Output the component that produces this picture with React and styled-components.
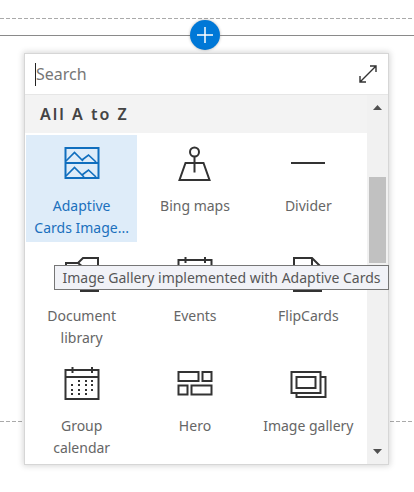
import React from "react";
import styled, { createGlobalStyle } from "styled-components";

const GlobalStyle = createGlobalStyle`
  *, *::before, *::after { box-sizing: border-box; }
  body {
    margin: 0;
    background: #fff;
    color: #666;
    font-family: "Segoe UI", "Noto Sans", "Open Sans", sans-serif;
    font-size: 14px;
  }
  button, input { font: inherit; color: inherit; }
`;

const Canvas = styled.main`
  padding-top: 18px;
  min-height: 100vh;
  overflow: hidden;
`;

const dashes = "repeating-linear-gradient(90deg, #aaa 0 4px, transparent 4px 6px)";

const Section = styled.section`
  position: relative;
  min-height: 404px;
  background: ${dashes} top / 100% 1px no-repeat, ${dashes} bottom / 100% 1px no-repeat;
`;

const InsertBar = styled.div`
  display: grid;
  grid-template-columns: 1fr 30px 1fr;
  align-items: center;
  padding: 2px 4px 0 0;
  &::before, &::after {
    content: "";
    height: 1px;
    background: #8a8a8a;
  }
  &::after { margin-right: -4px; }
`;

const AddButton = styled.button`
  display: grid;
  place-items: center;
  width: 30px;
  height: 30px;
  padding: 0;
  border: 0;
  border-radius: 50%;
  background: #0078d7;
  color: #fff;
  box-shadow: 0 0 3px rgba(0, 0, 0, 0.3);
`;

const Toolbox = styled.div`
  position: absolute;
  top: 35px;
  left: 24px;
  right: 25px;
  border: 1px solid #d6d6d6;
  background: #fff;
  box-shadow: 0 0 6px 1px rgba(0, 0, 0, 0.16);
`;

const SearchRow = styled.div`
  display: flex;
  align-items: center;
  height: 41px;
  padding: 0 11px 0 10px;
  border-bottom: 1px solid #e6e6e6;
`;

const Caret = styled.span`
  width: 1px;
  height: 23px;
  background: #222;
`;

const SearchInput = styled.input`
  flex: 1;
  min-width: 0;
  padding: 0;
  border: 0;
  outline: 0;
  background: transparent;
  font-size: 16px;
  &::placeholder { color: #767676; opacity: 1; }
`;

const ExpandButton = styled.button`
  display: flex;
  padding: 0;
  border: 0;
  background: none;
  color: #333;
`;

const Scroller = styled.div`
  display: grid;
  grid-template-columns: 1fr 21px;
`;

const Heading = styled.h2`
  margin: 0;
  padding-left: 15px;
  height: 38px;
  line-height: 38px;
  background: #f3f3f3;
  color: #444;
  font-size: 16px;
  font-weight: 600;
  letter-spacing: 2px;
`;

const Tiles = styled.div`
  display: grid;
  grid-template-columns: repeat(3, 1fr);
  gap: 3px 2px;
  padding: 2px 3px 2px 1px;
`;

const Tile = styled.button`
  display: flex;
  flex-direction: column;
  align-items: center;
  height: 107px;
  padding: 10px 7px 0;
  border: 0;
  background: ${(p) => (p.$active ? "#deecf9" : "transparent")};
  color: ${(p) => (p.$active ? "#1b70bd" : "#666")};
  line-height: 22px;
  svg {
    flex: none;
    margin-bottom: 14px;
    overflow: visible;
    color: ${(p) => (p.$active ? "#106ebe" : "#333")};
  }
`;

const Scrollbar = styled.div`
  display: grid;
  grid-template-rows: 24px 1fr 24px;
  justify-items: center;
  background: #f1f1f1;
`;

const ScrollButton = styled.button`
  display: grid;
  place-items: center;
  width: 100%;
  padding: 0;
  border: 0;
  background: none;
  color: #505050;
`;

const Thumb = styled.div`
  width: 17px;
  height: 86px;
  margin-top: 58px;
  background: #c1c1c1;
`;

const Tooltip = styled.div`
  position: absolute;
  top: 211px;
  left: 29px;
  right: -1px;
  height: 25px;
  border: 1px solid #767676;
  background: #f1f2f7;
  color: #575757;
  line-height: 23px;
  text-align: center;
  white-space: nowrap;
`;

function Icon({ children }) {
  return (
    <svg width="36" height="36" viewBox="0 0 36 36" fill="none" stroke="currentColor" strokeWidth="2" aria-hidden="true">
      {children}
    </svg>
  );
}

const dots = [
  [14, 21, 27].map((x) => [x, 16]),
  [7, 14, 21, 27].map((x) => [x, 20]),
  [7, 14, 21, 27].map((x) => [x, 25]),
  [7, 14, 21].map((x) => [x, 29]),
].flat();

const calendar = (
  <Icon>
    <path d="M1.500 5h33v29h-33zM1.500 12h33M8.500 2v6M28 2v6" />
    {dots.map(([x, y]) => (
      <rect key={`${x}-${y}`} x={x} y={y - 1} width="2" height="2" fill="currentColor" stroke="none" />
    ))}
  </Icon>
);

const parts = [
  {
    label: "Adaptive Cards Image...",
    active: true,
    icon: (
      <Icon>
        <path d="M1.500 3h33v30h-33zM1.500 18h33" />
        <path strokeWidth="1.7" d="M2 16l8.500-8.500L19 16M18 15l6.500-5L32 17M2 31l8.500-8.500L20 32M18 30l6.500-5L32 32" />
      </Icon>
    ),
  },
  {
    label: "Bing maps",
    icon: (
      <Icon>
        <circle cx="17.500" cy="7" r="4.500" />
        <path d="M17.500 11.500v16M8.500 18h18l6 17h-30z" />
      </Icon>
    ),
  },
  { label: "Divider", icon: <Icon><path d="M1 18h34" /></Icon> },
  { label: "Document library", icon: <Icon><path d="M2 31V8h12l5-5h15v33H16M2 31h14M14 8l5 4h15" /></Icon> },
  { label: "Events", icon: calendar },
  { label: "FlipCards", icon: <Icon><path d="M4 3h18l9 9v24H4zM22 3v9h9" /></Icon> },
  { label: "Group calendar", icon: calendar },
  {
    label: "Hero",
    icon: <Icon><path d="M1.500 7h20v9h-20zM25.500 7h9v9h-9zM1.500 20.500h9v9h-9zM14.500 20.500h20v9h-20z" /></Icon>,
  },
  {
    label: "Image gallery",
    icon: (
      <Icon>
        <path d="M1.500 7h29v21h-29zM6.500 12h19v11h-19zM30.500 12h5v20h-29v-4" />
      </Icon>
    ),
  },
];

export default function App() {
  return (
    <>
      <GlobalStyle />
      <Canvas>
        <Section>
          <InsertBar>
            <AddButton aria-label="Add a web part">
              <svg width="18" height="18" viewBox="0 0 18 18" stroke="currentColor" strokeWidth="1.5" aria-hidden="true">
                <path d="M1 9h16M9 1v16" />
              </svg>
            </AddButton>
          </InsertBar>
          <Toolbox role="dialog" aria-label="Web parts">
            <SearchRow>
              <Caret />
              <SearchInput type="text" placeholder="Search" aria-label="Search" />
              <ExpandButton aria-label="Expand">
                <svg width="18" height="18" viewBox="0 0 18 18" fill="none" stroke="currentColor" strokeWidth="1.4" aria-hidden="true">
                  <path d="M1 17L17 1M11 1h6v6M1 11v6h6" />
                </svg>
              </ExpandButton>
            </SearchRow>
            <Scroller>
              <div>
                <Heading>All A to Z</Heading>
                <Tiles>
                  {parts.map((part) => (
                    <Tile key={part.label} $active={part.active}>
                      {part.icon}
                      <span>{part.label}</span>
                    </Tile>
                  ))}
                </Tiles>
              </div>
              <Scrollbar>
                <ScrollButton aria-label="Scroll up">
                  <svg width="9" height="6" viewBox="0 0 9 6" aria-hidden="true"><path d="M0 6l4.500-5L9 6z" fill="currentColor" /></svg>
                </ScrollButton>
                <Thumb />
                <ScrollButton aria-label="Scroll down">
                  <svg width="9" height="6" viewBox="0 0 9 6" aria-hidden="true"><path d="M0 0l4.500 5L9 0z" fill="currentColor" /></svg>
                </ScrollButton>
              </Scrollbar>
            </Scroller>
            <Tooltip role="tooltip">Image Gallery implemented with Adaptive Cards</Tooltip>
          </Toolbox>
        </Section>
      </Canvas>
    </>
  );
}
